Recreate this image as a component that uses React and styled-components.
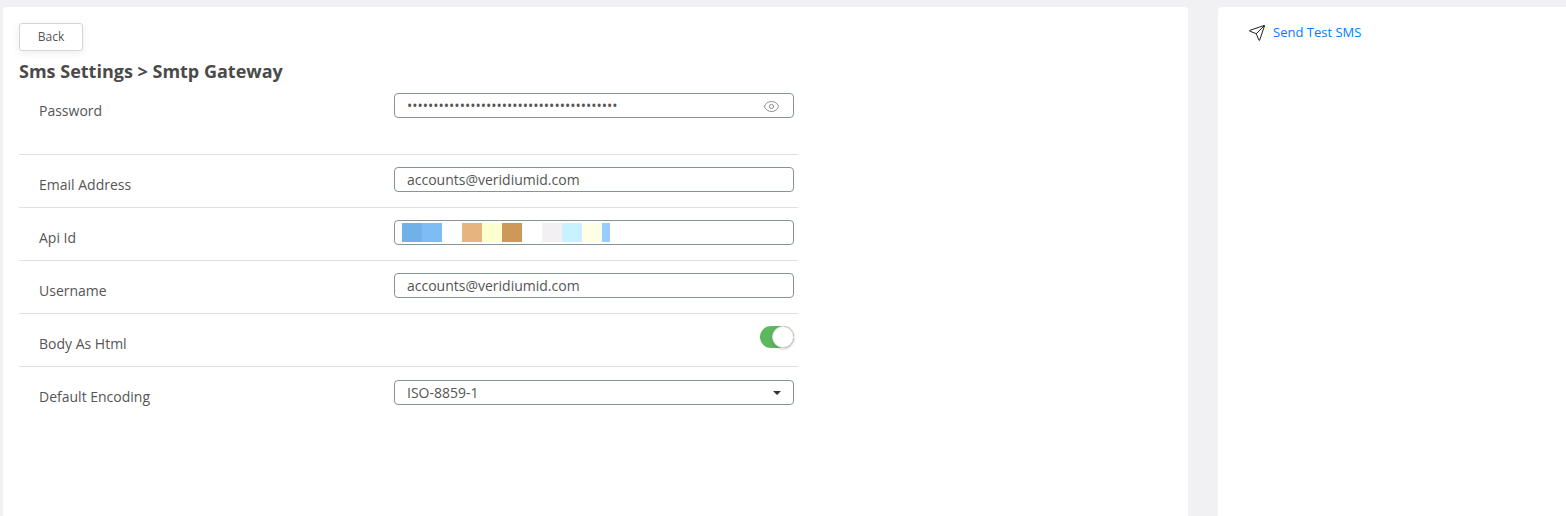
import React from "react";
import styled, { createGlobalStyle } from "styled-components";
import { Eye, Send } from "lucide-react";

const Global = createGlobalStyle`
  html, body { margin: 0; padding: 0; height: 100%; overflow: hidden; background: #f1f1f3; }
  body { font-family: "Open Sans", "Liberation Sans", sans-serif; color: #555; }
`;

const Page = styled.div`
  display: flex;
  height: 516px;
  padding: 7px 0 0 3px;
  box-sizing: border-box;
  gap: 30px;
`;

const MainCard = styled.main`
  width: 1185px;
  box-sizing: border-box;
  background: #fff;
  border-radius: 4px 4px 0 0;
  padding: 16px 0 0 16px;
`;

const SideCard = styled.aside`
  flex: 1;
  background: #fff;
  border-radius: 4px 0 0 0;
  padding: 16px 0 0 30px;
`;

const BackButton = styled.button`
  display: block;
  width: 64px;
  height: 28px;
  padding: 0 0 2px;
  box-sizing: border-box;
  background: #fff;
  border: 1px solid #d6d6d6;
  border-radius: 3px;
  box-shadow: 0 2px 8px rgba(0, 0, 0, 0.08);
  font: 400 12px "Open Sans", sans-serif;
  color: #555;
`;

const Title = styled.h1`
  margin: 8px 0 0;
  font-size: 18px;
  line-height: 24px;
  font-weight: 700;
  color: #4a4a4a;
`;

const Form = styled.div`
  width: 779px;
  margin-top: 10px;
`;

const Row = styled.div`
  display: flex;
  align-items: flex-start;
  justify-content: space-between;
  box-sizing: border-box;
  height: ${(p) => p.$height || 53}px;
  padding: ${(p) => p.$top ?? 12}px 4px 0 20px;
  border-bottom: ${(p) => (p.$last ? "none" : "1px solid #e0e0e0")};
`;

const Label = styled.label`
  font-size: 14px;
  line-height: 20px;
  margin-top: ${(p) => p.$offset ?? 8}px;
  color: #555;
`;

const Field = styled.div`
  position: relative;
  display: flex;
  align-items: center;
  width: 400px;
  height: 25px;
  box-sizing: border-box;
  border: 1px solid #869593;
  border-radius: 4px;
  padding: 0 12px;
  background: #fff;
`;

const TextInput = styled.input`
  flex: 1;
  min-width: 0;
  padding: 0;
  border: 0;
  outline: 0;
  background: transparent;
  font: 400 14px "Open Sans", sans-serif;
  color: #555;
`;

const EyeIcon = styled(Eye)`
  position: absolute;
  right: 13px;
  top: 4px;
  color: #808080;
`;

const Swatches = styled.div`
  display: flex;
  margin-left: -5px;
  height: 19px;
`;

const Swatch = styled.span`
  display: block;
  width: ${(p) => p.$w || 20}px;
  background: ${(p) => p.$c};
`;

const ToggleWrap = styled.div`
  position: relative;
  width: 34px;
  height: 22px;
  border-radius: 11px;
  background: #5cb85c;
`;

const Knob = styled.span`
  position: absolute;
  right: 0;
  top: 0;
  width: 22px;
  height: 22px;
  box-sizing: border-box;
  border-radius: 50%;
  background: #fff;
  border: 1px solid #dcdcdc;
  box-shadow: 0 1px 3px rgba(0, 0, 0, 0.2);
`;

const SelectValue = styled.span`
  flex: 1;
  font-size: 14px;
  color: #555;
`;

const Caret = styled.span`
  width: 0;
  height: 0;
  border-left: 4px solid transparent;
  border-right: 4px solid transparent;
  border-top: 4px solid #333;
`;

const SendLink = styled.a`
  display: flex;
  align-items: flex-start;
  gap: 7px;
  font-size: 13px;
  line-height: 18px;
  color: #007bff;
`;

const SendIcon = styled(Send)`
  color: #111;
  margin-top: 1px;
`;

const swatches = [
  ["#6fb1e8"], ["#7dbdf4"], ["#ffffff"], ["#e5b47f"], ["#ffffd0"], ["#cd9858"],
  ["#ffffff"], ["#f2f0f3"], ["#c8f2ff"], ["#fffee6"], ["#98ccfd", 8],
];

export default function App() {
  return (
    <>
      <Global />
      <Page>
        <MainCard>
          <BackButton>Back</BackButton>
          <Title>Sms Settings &gt; Smtp Gateway</Title>
          <Form>
            <Row $height={62} $top={0}>
              <Label>Password</Label>
              <Field>
                <TextInput type="password" readOnly value={"x".repeat(40)} />
                <EyeIcon size={17} strokeWidth={1.25} />
              </Field>
            </Row>
            <Row>
              <Label>Email Address</Label>
              <Field>
                <TextInput readOnly value="accounts@veridiumid.com" />
              </Field>
            </Row>
            <Row>
              <Label>Api Id</Label>
              <Field>
                <Swatches>
                  {swatches.map(([c, w], i) => (
                    <Swatch key={i} $c={c} $w={w} />
                  ))}
                </Swatches>
              </Field>
            </Row>
            <Row>
              <Label>Username</Label>
              <Field>
                <TextInput readOnly value="accounts@veridiumid.com" />
              </Field>
            </Row>
            <Row>
              <Label>Body As Html</Label>
              <ToggleWrap>
                <Knob />
              </ToggleWrap>
            </Row>
            <Row $last $top={13}>
              <Label $offset={7}>Default Encoding</Label>
              <Field>
                <SelectValue>ISO-8859-1</SelectValue>
                <Caret />
              </Field>
            </Row>
          </Form>
        </MainCard>
        <SideCard>
          <SendLink>
            <SendIcon size={18} strokeWidth={1.25} />
            <span>Send Test SMS</span>
          </SendLink>
        </SideCard>
      </Page>
    </>
  );
}
